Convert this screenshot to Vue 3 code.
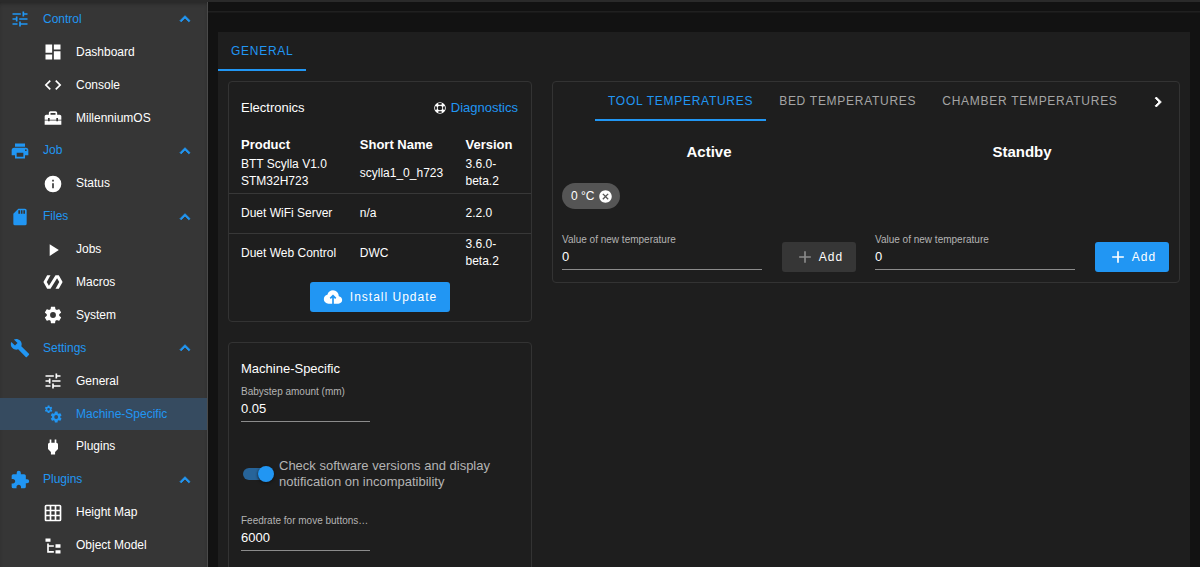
<script setup>
import { ref } from 'vue'

const cog = 'M12,15.5A3.5,3.5 0 0,1 8.5,12A3.5,3.5 0 0,1 12,8.5A3.5,3.5 0 0,1 15.5,12A3.5,3.5 0 0,1 12,15.5M19.43,12.97C19.47,12.65 19.5,12.33 19.5,12C19.5,11.67 19.47,11.34 19.43,11L21.54,9.37C21.73,9.22 21.78,8.95 21.66,8.73L19.66,5.27C19.54,5.05 19.27,4.96 19.05,5.05L16.56,6.05C16.04,5.66 15.5,5.32 14.87,5.07L14.5,2.42C14.46,2.18 14.25,2 14,2H10C9.75,2 9.54,2.18 9.5,2.42L9.13,5.07C8.5,5.32 7.96,5.66 7.44,6.05L4.95,5.05C4.73,4.96 4.46,5.05 4.34,5.27L2.34,8.73C2.21,8.95 2.27,9.22 2.46,9.37L4.57,11C4.53,11.34 4.5,11.67 4.5,12C4.5,12.33 4.53,12.65 4.57,12.97L2.46,14.63C2.27,14.78 2.21,15.05 2.34,15.27L4.34,18.73C4.46,18.95 4.73,19.03 4.95,18.95L7.44,17.94C7.96,18.34 8.5,18.68 9.13,18.93L9.5,21.58C9.54,21.82 9.75,22 10,22H14C14.25,22 14.46,21.82 14.5,21.58L14.87,18.93C15.5,18.67 16.04,18.34 16.56,17.94L19.05,18.95C19.27,19.03 19.54,18.95 19.66,18.73L21.66,15.27C21.78,15.05 21.73,14.78 21.54,14.63L19.43,12.97Z'

const icons = {
  tune: 'M3,17V19H9V17H3M3,5V7H13V5H3M13,21V19H21V17H13V15H11V21H13M7,9V11H3V13H7V15H9V9H7M21,13V11H11V13H21M15,9H17V7H21V5H17V3H15V9Z',
  dashboard: 'M13,3V9H21V3M13,21H21V11H13M3,21H11V15H3M3,13H11V3H3V13Z',
  code: 'M14.6,16.6L19.2,12L14.6,7.4L16,6L22,12L16,18L14.6,16.6M9.4,16.6L4.8,12L9.4,7.4L8,6L2,12L8,18L9.4,16.6Z',
  toolbox: 'M18 16H16V15H8V16H6V15H2V20H22V15H18V16M20 8H17V6C17 4.9 16.1 4 15 4H9C7.9 4 7 4.9 7 6V8H4C2.9 8 2 8.9 2 10V14H6V12H8V14H16V12H18V14H22V10C22 8.9 21.1 8 20 8M15 8H9V6H15V8Z',
  printer: 'M18,3H6V7H18M19,12A1,1 0 0,1 18,11A1,1 0 0,1 19,10A1,1 0 0,1 20,11A1,1 0 0,1 19,12M16,19H8V14H16M19,8H5A3,3 0 0,0 2,11V17H6V21H18V17H22V11A3,3 0 0,0 19,8Z',
  info: 'M13,9H11V7H13M13,17H11V11H13M12,2A10,10 0 0,0 2,12A10,10 0 0,0 12,22A10,10 0 0,0 22,12A10,10 0 0,0 12,2Z',
  sd: 'M18,8H16V4H18M15,8H13V4H15M12,8H10V4H12M18,2H10L4,8V20A2,2 0 0,0 6,22H18A2,2 0 0,0 20,20V4A2,2 0 0,0 18,2Z',
  play: 'M8,5.14V19.14L19,12.14L8,5.14Z',
  polymer: 'M19,4H15L7.1,16.63L4.5,12L9,4H5L0.5,12L5,20H9L16.89,7.37L19.5,12L15,20H19L23.5,12L19,4Z',
  cog,
  wrench: 'M22.7,19L13.6,9.9C14.5,7.6 14,4.9 12.1,3C10.1,1 7.1,0.6 4.7,1.7L9,6L6,9L1.6,4.7C0.4,7.1 0.9,10.1 2.9,12.1C4.8,14 7.5,14.5 9.8,13.6L18.9,22.7C19.3,23.1 19.9,23.1 20.3,22.7L22.6,20.4C23.1,20 23.1,19.3 22.7,19Z',
  plug: 'M16,7V3H14V7H10V3H8V7H8C7,7 6,8 6,9V14.5L9.5,18V21H14.5V18L18,14.5V9C18,8 17,7 16,7Z',
  puzzle: 'M20.5,11H19V7C19,5.89 18.1,5 17,5H13V3.5A2.5,2.5 0 0,0 10.5,1A2.5,2.5 0 0,0 8,3.5V5H4A2,2 0 0,0 2,7V10.8H3.5C5,10.8 6.2,12 6.2,13.5C6.2,15 5,16.2 3.5,16.2H2V20A2,2 0 0,0 4,22H7.8V20.5C7.8,19 9,17.8 10.5,17.8C12,17.8 13.2,19 13.2,20.5V22H17A2,2 0 0,0 19,20V16H20.5A2.5,2.5 0 0,0 23,13.5A2.5,2.5 0 0,0 20.5,11Z',
  grid: 'M10,4V8H14V4H10M16,4V8H20V4H16M16,10V14H20V10H16M16,16V20H20V16H16M14,20V16H10V20H14M8,20V16H4V20H8M8,14V10H4V14H8M8,8V4H4V8H8M10,14H14V10H10V14M4,2H20A2,2 0 0,1 22,4V20A2,2 0 0,1 20,22H4C2.92,22 2,21.1 2,20V4A2,2 0 0,1 4,2Z',
  tree: 'M3,3H9V7H3V3M15,10H21V14H15V10M15,17H21V21H15V17M13,13H7V18H13V20H7L5,20V9H7V11H13V13Z',
}

const groups = [
  { title: 'Control', icon: 'tune', items: [
    { title: 'Dashboard', icon: 'dashboard' },
    { title: 'Console', icon: 'code' },
    { title: 'MillenniumOS', icon: 'toolbox' },
  ] },
  { title: 'Job', icon: 'printer', items: [{ title: 'Status', icon: 'info' }] },
  { title: 'Files', icon: 'sd', items: [
    { title: 'Jobs', icon: 'play' },
    { title: 'Macros', icon: 'polymer' },
    { title: 'System', icon: 'cog' },
  ] },
  { title: 'Settings', icon: 'wrench', items: [
    { title: 'General', icon: 'tune' },
    { title: 'Machine-Specific', icon: 'cogs', active: true },
    { title: 'Plugins', icon: 'plug' },
  ] },
  { title: 'Plugins', icon: 'puzzle', items: [
    { title: 'Height Map', icon: 'grid' },
    { title: 'Object Model', icon: 'tree' },
  ] },
]

const boards = [
  { product: 'BTT Scylla V1.0 STM32H723', short: 'scylla1_0_h723', version: '3.6.0-beta.2' },
  { product: 'Duet WiFi Server', short: 'n/a', version: '2.2.0' },
  { product: 'Duet Web Control', short: 'DWC', version: '3.6.0-beta.2' },
]

const tabs = ['Tool Temperatures', 'Bed Temperatures', 'Chamber Temperatures']
const columns = ref([
  { id: 'active', title: 'Active', temps: [0], value: '0' },
  { id: 'standby', title: 'Standby', temps: [], value: '0' },
])
const babystep = ref('0.05')
const feedrate = ref('6000')
const checkVersions = ref(true)

const exists = (col) => col.temps.includes(Number(col.value))
</script>

<template>
  <div class="app">
    <nav class="sidebar">
      <template v-for="group in groups" :key="group.title">
        <button type="button" class="group">
          <svg class="icon" viewBox="0 0 24 24"><path :d="icons[group.icon]" /></svg>
          <span class="group-title">{{ group.title }}</span>
          <svg class="icon chevron" viewBox="0 0 24 24"><path d="M7.41,15.41L12,10.83L16.59,15.41L18,14L12,8L6,14L7.41,15.41Z" /></svg>
        </button>
        <a v-for="item in group.items" :key="item.title" href="#" class="item" :class="{ active: item.active }">
          <svg class="icon" viewBox="0 0 24 24">
            <template v-if="item.icon === 'cogs'">
              <path transform="translate(1.3 1) scale(0.45)" :d="cog" />
              <path transform="translate(7.9 7.7) scale(0.66)" :d="cog" />
            </template>
            <path v-else :d="icons[item.icon]" />
          </svg>
          <span>{{ item.title }}</span>
        </a>
      </template>
    </nav>

    <div class="page">
      <main class="panel">
        <div class="tabs" role="tablist">
          <button type="button" role="tab" class="tab selected" aria-selected="true">General</button>
        </div>
        <div class="content">
          <div class="left">
            <section class="card">
              <header class="card-title">
                <h2>Electronics</h2>
                <a href="#" class="diagnostics">
                  <svg class="icon small" viewBox="0 0 24 24"><path d="M19.79,15.41C20.74,13.24 20.74,10.75 19.79,8.59L17.05,9.83C17.65,11.21 17.65,12.78 17.06,14.17L19.79,15.41M15.42,4.21C13.25,3.26 10.76,3.26 8.59,4.21L9.83,6.94C11.22,6.35 12.79,6.35 14.18,6.95L15.42,4.21M4.21,8.58C3.26,10.76 3.26,13.24 4.21,15.42L6.95,14.17C6.35,12.79 6.35,11.21 6.95,9.82L4.21,8.58M8.59,19.79C10.76,20.74 13.25,20.74 15.42,19.78L14.18,17.05C12.8,17.65 11.22,17.65 9.84,17.06L8.59,19.79M12,2A10,10 0 0,1 22,12A10,10 0 0,1 12,22A10,10 0 0,1 2,12A10,10 0 0,1 12,2M12,8A4,4 0 0,0 8,12A4,4 0 0,0 12,16A4,4 0 0,0 16,12A4,4 0 0,0 12,8Z" /></svg>
                  <span>Diagnostics</span>
                </a>
              </header>
              <table>
                <thead>
                  <tr><th class="product">Product</th><th class="short">Short Name</th><th>Version</th></tr>
                </thead>
                <tbody>
                  <tr v-for="board in boards" :key="board.product">
                    <td>{{ board.product }}</td>
                    <td>{{ board.short }}</td>
                    <td>{{ board.version }}</td>
                  </tr>
                </tbody>
              </table>
              <div class="update">
                <button type="button" class="btn primary">
                  <svg class="icon" viewBox="0 0 24 24"><path d="M11 20H6.5Q4.22 20 2.61 18.43 1 16.85 1 14.58 1 12.63 2.17 11.1 3.35 9.57 5.25 9.15 5.88 6.85 7.75 5.43 9.63 4 12 4 14.93 4 16.96 6.04 19 8.07 19 11 20.73 11.2 21.86 12.5 23 13.78 23 15.5 23 17.38 21.69 18.69 20.38 20 18.5 20H13V12.85L14.6 14.4 16 13 12 9 8 13 9.4 14.4 11 12.85Z" /></svg>
                  <span>Install Update</span>
                </button>
              </div>
            </section>

            <section class="card">
              <header class="card-title tight"><h2>Machine-Specific</h2></header>
              <div class="settings">
                <div class="field half">
                  <label for="babystep">Babystep amount (mm)</label>
                  <input id="babystep" v-model="babystep" type="text">
                </div>
                <div class="switch">
                  <input id="check" v-model="checkVersions" type="checkbox" role="switch">
                  <label for="check">Check software versions and display notification on incompatibility</label>
                </div>
                <div class="field half">
                  <label for="feedrate">Feedrate for move buttons…</label>
                  <input id="feedrate" v-model="feedrate" type="text">
                </div>
              </div>
            </section>
          </div>

          <section class="card right">
            <div class="tabs inset" role="tablist">
              <button
                v-for="(tab, i) in tabs" :key="tab" type="button" role="tab"
                class="tab" :class="{ selected: i === 0 }" :aria-selected="i === 0"
              >{{ tab }}</button>
              <button type="button" class="next" aria-label="Next tabs">
                <svg class="icon chevron" viewBox="0 0 24 24"><path d="M8.59,16.58L13.17,12L8.59,7.41L10,6L16,12L10,18L8.59,16.58Z" /></svg>
              </button>
            </div>
            <div class="temps">
              <div v-for="col in columns" :key="col.id" class="temp">
                <h3>{{ col.title }}</h3>
                <div class="chips">
                  <span v-for="t in col.temps" :key="t" class="chip">
                    {{ t }} °C
                    <button type="button" aria-label="Remove">
                      <svg viewBox="0 0 24 24"><path d="M12,2C17.53,2 22,6.47 22,12C22,17.53 17.53,22 12,22C6.47,22 2,17.53 2,12C2,6.47 6.47,2 12,2M15.59,7L12,10.59L8.41,7L7,8.41L10.59,12L7,15.59L8.41,17L12,13.41L15.59,17L17,15.59L13.41,12L17,8.41L15.59,7Z" /></svg>
                    </button>
                  </span>
                </div>
                <div class="add-row">
                  <div class="field">
                    <label :for="col.id">Value of new temperature</label>
                    <input :id="col.id" v-model="col.value" type="text">
                  </div>
                  <button type="button" class="btn add" :class="exists(col) ? 'muted' : 'primary'">
                    <svg class="icon" viewBox="0 0 24 24"><path d="M19,13H13V19H11V13H5V11H11V5H13V11H19V13Z" /></svg>
                    <span>Add</span>
                  </button>
                </div>
              </div>
            </div>
          </section>
        </div>
      </main>
    </div>
  </div>
</template>

<style>
html, body { background: #121212; }
body { margin: 0; }
</style>

<style scoped>
.app {
  display: flex;
  height: 100vh;
  overflow: hidden;
  box-sizing: border-box;
  border-top: 2px solid #2a2a2a;
  background: #121212;
  color: #fff;
  font: 12px/17px "Liberation Sans", Arial, Helvetica, sans-serif;
}
.app *, .app *::before, .app *::after { box-sizing: border-box; }
button { margin: 0; padding: 0; border: 0; background: none; color: inherit; font: inherit; cursor: pointer; }
a { color: inherit; text-decoration: none; }
h2, h3 { margin: 0; font-weight: 400; }
svg { display: block; fill: currentColor; flex: none; }
.icon { width: 20px; height: 20px; }
.icon.small { width: 14px; height: 14px; }
.chevron { stroke: currentColor; stroke-width: 1; }

.sidebar {
  flex: none;
  display: grid;
  grid-auto-rows: minmax(32px, 1fr);
  width: 208px;
  padding: 1px 0 5px;
  background: #363636;
  border-right: 1px solid #4a4a4a;
  box-shadow: inset 0 3px 4px -2px #222;
}
.group, .item { display: flex; align-items: center; }
.group { padding: 0 12px 0 10px; color: #2196f3; text-align: left; }
.group-title { flex: 1; margin-left: 13px; }
.item { padding-left: 43px; gap: 13px; }
.item.active { color: #2196f3; background: #364b60; }

.page {
  flex: 1;
  min-width: 0;
  overflow: hidden;
  padding: 30px 10px 0;
  background: linear-gradient(#121212 9px, #202020 9px, #202020 10px, #121212 11px);
}
.panel { min-height: 100%; background: #1e1e1e; }

.tabs { display: flex; height: 39px; }
.tab {
  padding: 0 13px;
  border-bottom: 2px solid transparent;
  border-top: 2px solid transparent;
  color: #a5a5a5;
  letter-spacing: 0.06em;
  text-transform: uppercase;
  white-space: nowrap;
}
.tab.selected { color: #2196f3; border-bottom-color: #2196f3; }
.tabs.inset { padding: 0 11px 0 42px; }
.next { margin-left: auto; }

.content {
  display: grid;
  grid-template-columns: repeat(12, minmax(0, 1fr));
  gap: 20px;
  align-items: start;
  padding: 10px;
}
.left { grid-column: span 4; display: grid; gap: 20px; }
.right { grid-column: span 8; }
.card { border: 1px solid #333; border-radius: 4px; }
.card-title { display: flex; justify-content: space-between; padding: 13px 13px 13px 12px; font-size: 13px; line-height: 26px; }
.card-title h2 { font-size: 13px; }
.card-title.tight { padding-bottom: 0; }
.diagnostics { display: flex; align-items: center; gap: 4px; color: #2196f3; }
.diagnostics svg { color: #fff; }

table { width: 100%; border-collapse: collapse; table-layout: fixed; }
th, td { padding: 0 0 0 13px; text-align: left; }
th { height: 20px; font-size: 13px; }
th:first-child, td:first-child { padding-left: 12px; }
.product { width: 39%; }
.short { width: 35%; }
td { height: 39px; padding: 2px 0 2px 13px; }
td:last-child { padding-right: 10px; }
tbody tr + tr { border-top: 1px solid #383838; }
tbody tr + tr td { height: 40px; }

.update { display: flex; justify-content: center; padding: 9px; }
.btn {
  display: flex;
  align-items: center;
  justify-content: center;
  height: 30px;
  padding: 0 13px;
  border-radius: 3px;
  letter-spacing: 1px;
}
.btn svg { margin-right: 7px; }
.primary { background: #2196f3; }
.muted { background: #363636; }
.muted svg { color: #8a8a8a; }
.btn.add { width: 74px; padding: 0; }
.btn.add svg { margin-right: 4px; }

.field label { display: block; color: #b4b4b4; font-size: 10px; line-height: 13px; white-space: nowrap; }
.field input {
  display: block;
  width: 100%;
  height: 24px;
  padding: 0 0 2px;
  border: 0;
  border-bottom: 1px solid #8c8c8c;
  background: none;
  color: #fff;
  font: inherit;
  font-size: 13px;
  outline: 0;
}
.half { width: calc(50% - 10px); }
.settings { padding: 3px 12px 26px; }

.switch { display: flex; align-items: center; gap: 4px; margin: 36px 0 24px; }
.switch label { flex: 1; color: #b4b4b4; font-size: 13px; line-height: 16px; }
.switch input { position: relative; flex: none; width: 34px; height: 16px; margin: 0; appearance: none; }
.switch input::before { content: ""; position: absolute; inset: 2px 4px 2px 2px; border-radius: 6px; background: #276499; }
.switch input::after { content: ""; position: absolute; top: 0; right: 1px; width: 16px; height: 16px; border-radius: 50%; background: #2196f3; box-shadow: 0 1px 3px #111; }

.temps { display: grid; grid-template-columns: 1fr 1fr; }
.temp { padding: 20px 10px 10px 9px; }
h3 { font-size: 15px; font-weight: 700; line-height: 22px; text-align: center; }
.chips { display: flex; min-height: 26px; margin: 20px 0 24px; }
.chip { display: flex; align-items: center; gap: 4px; height: 26px; padding: 0 7px 0 9px; border-radius: 13px; background: #555; }
.chip svg { width: 15px; height: 15px; }
.add-row { display: flex; align-items: flex-end; gap: 20px; }
.add-row .field { flex: 1; min-width: 0; padding-bottom: 2px; }
</style>
